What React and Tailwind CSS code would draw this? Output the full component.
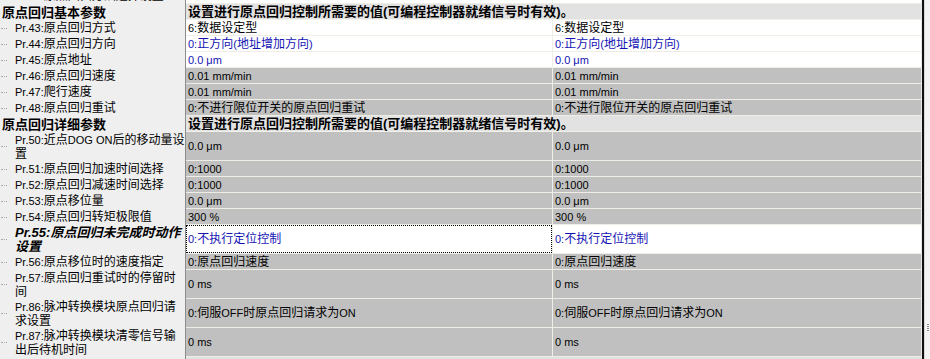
import React from "react";

const rows = [
  { type: "row", label: ["Pr.42:原点回归方法选择设置"], v: "", bg: "white", partial: true },
  { type: "header", left: "原点回归基本参数", right: "设置进行原点回归控制所需要的值(可编程控制器就绪信号时有效)。" },
  { type: "row", label: ["Pr.43:原点回归方式"], v: "6:数据设定型", bg: "white" },
  { type: "row", label: ["Pr.44:原点回归方向"], v: "0:正方向(地址增加方向)", bg: "white", blue: true },
  { type: "row", label: ["Pr.45:原点地址"], v: "0.0 μm", bg: "white", blue: true },
  { type: "row", label: ["Pr.46:原点回归速度"], v: "0.01 mm/min", bg: "gray" },
  { type: "row", label: ["Pr.47:爬行速度"], v: "0.01 mm/min", bg: "gray" },
  { type: "row", label: ["Pr.48:原点回归重试"], v: "0:不进行限位开关的原点回归重试", bg: "gray" },
  { type: "header", left: "原点回归详细参数", right: "设置进行原点回归控制所需要的值(可编程控制器就绪信号时有效)。" },
  { type: "row", label: ["Pr.50:近点DOG ON后的移动量设", "置"], v: "0.0 μm", bg: "gray" },
  { type: "row", label: ["Pr.51:原点回归加速时间选择"], v: "0:1000", bg: "gray" },
  { type: "row", label: ["Pr.52:原点回归减速时间选择"], v: "0:1000", bg: "gray" },
  { type: "row", label: ["Pr.53:原点移位量"], v: "0.0 μm", bg: "gray" },
  { type: "row", label: ["Pr.54:原点回归转矩极限值"], v: "300 %", bg: "gray" },
  { type: "row", label: ["Pr.55:原点回归未完成时动作", "设置"], v: "0:不执行定位控制", bg: "white", blue: true, strong: true, focus: true },
  { type: "row", label: ["Pr.56:原点移位时的速度指定"], v: "0:原点回归速度", bg: "gray" },
  { type: "row", label: ["Pr.57:原点回归重试时的停留时", "间"], v: "0 ms", bg: "gray" },
  { type: "row", label: ["Pr.86:脉冲转换模块原点回归请", "求设置"], v: "0:伺服OFF时原点回归请求为ON", bg: "gray" },
  { type: "row", label: ["Pr.87:脉冲转换模块清零信号输", "出后待机时间"], v: "0 ms", bg: "gray" },
  { type: "header", left: "", right: "" },
];

function Mixed({ text }) {
  const parts = text.split(/([\x00-\x7F\u03bc]+)/).filter((p) => p !== "");
  return (
    <>
      {parts.map((p, i) =>
        /^[\x00-\x7F\u03bc]+$/.test(p) ? (
          <span key={i} className="text-[11px]">
            {p}
          </span>
        ) : (
          <span key={i}>{p}</span>
        )
      )}
    </>
  );
}

function Header({ left, right }) {
  return (
    <div className="flex h-[16px] shrink-0">
      <div className="w-[185px] shrink-0 bg-[#efefef] pl-[2px] flex items-center font-bold text-[13px] leading-[15px] whitespace-nowrap overflow-hidden">
        {left}
      </div>
      <div className="w-[1px] shrink-0 bg-[#8c8c8c]" />
      <div className="flex-1 bg-[#e2e2e2] border-b border-[#f2f2ea] pl-[2px] flex items-center font-bold text-[13px] leading-[15px] whitespace-nowrap overflow-hidden">
        {right}
      </div>
    </div>
  );
}

function ValueCell({ v, bg, blue, focus, w, last }) {
  const bgc = bg === "white" ? "bg-white" : "bg-[#c0c0c0]";
  const color = blue ? "text-[#1414b4]" : "text-black";
  return (
    <div className={`${w} shrink-0 ${bgc} border-b border-[#eeeee6] ${last ? "" : "border-r"} flex`}>
      <div
        className={`flex-1 flex items-center pl-[1px] whitespace-nowrap overflow-hidden leading-[14px] ${color} ${
          focus ? "border border-dotted border-black" : "border border-transparent"
        }`}
      >
        <span>
          <Mixed text={v} />
        </span>
      </div>
    </div>
  );
}

function Row({ r }) {
  const tall = r.label.length > 1;
  const h = r.partial ? "h-[16px] -mt-[12px]" : tall ? "h-[29px]" : "h-[16px]";
  return (
    <div className={`flex ${h} shrink-0`}>
      <div className="w-[185px] shrink-0 bg-[#efefef] flex items-center">
        <div className="w-[6px] ml-[1px] border-t border-dotted border-[#a8a8a8] shrink-0" />
        <div
          className={`ml-[8px] flex flex-col whitespace-nowrap ${
            r.strong ? "font-bold italic text-[13px] leading-[14px]" : "text-[12px] leading-[14px]"
          }`}
        >
          {r.label.map((l, i) => (
            <span key={i}>{r.strong ? l : <Mixed text={l} />}</span>
          ))}
        </div>
      </div>
      <div className="w-[1px] shrink-0 bg-[#8c8c8c]" />
      <ValueCell v={r.v} bg={r.bg} blue={r.blue} focus={r.focus} w="w-[367px] border-[#eeeee6]" />
      <ValueCell v={r.v} bg={r.bg} blue={r.blue} w="w-[368px]" last />
    </div>
  );
}

export default function App() {
  return (
    <div className="w-[930px] h-[359px] overflow-hidden flex bg-[#f0f0f0] font-['Liberation_Sans','Noto_Sans_CJK_SC',sans-serif] text-[12px] text-black">
      <div className="w-[921px] shrink-0 flex flex-col overflow-hidden">
        {rows.map((r, i) =>
          r.type === "header" ? <Header key={i} left={r.left} right={r.right} /> : <Row key={i} r={r} />
        )}
      </div>
      <div className="w-[1px] shrink-0 bg-[#e8e8e8]" />
      <div className="w-[2px] shrink-0 bg-[#111111]" />
      <div className="w-[1px] shrink-0 bg-[#d8d8d8]" />
      <div className="flex-1 bg-[#f4f4f4] flex flex-col items-center justify-end pb-[28px]">
        <div className="flex flex-col gap-[1px]">
          <div className="w-[2px] h-[1px] bg-[#888]" />
          <div className="w-[2px] h-[1px] bg-[#888]" />
          <div className="w-[2px] h-[1px] bg-[#888]" />
          <div className="w-[2px] h-[1px] bg-[#888]" />
        </div>
      </div>
    </div>
  );
}
